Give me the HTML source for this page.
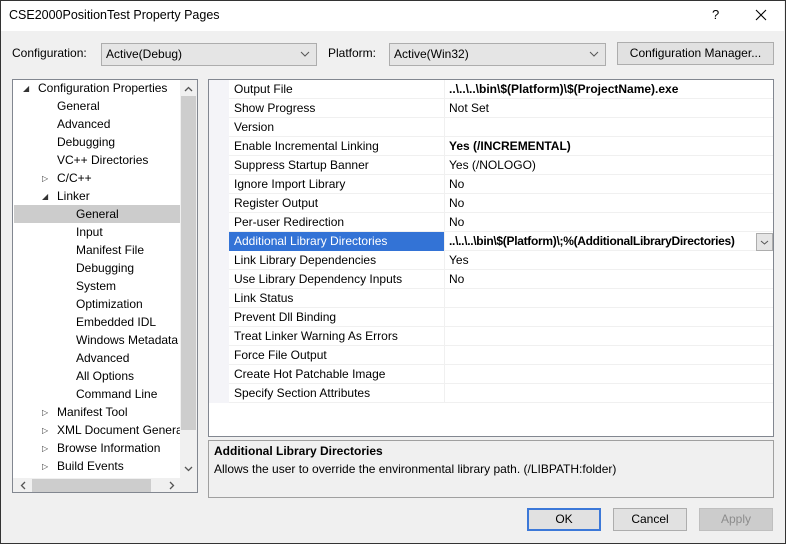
<!DOCTYPE html><html><head><style>
*{box-sizing:border-box;margin:0;padding:0}
body{width:786px;height:544px;overflow:hidden;font-family:"Liberation Sans",sans-serif;font-size:12px;color:#000;background:#f0f0f0;position:relative}
.abs{position:absolute}
.win{position:absolute;left:0;top:0;width:786px;height:544px;border:1px solid #333}
.title{position:absolute;left:0;top:0;width:784px;height:31px;background:#fff}
.combo{position:absolute;height:23px;background:#e5e5e5;border:1px solid #adadad;padding:3px 4px;line-height:15px}
.chev{position:absolute;right:6px;top:7px}
.btn{position:absolute;height:23px;background:#e1e1e1;border:1px solid #adadad;text-align:center;line-height:21px}
.tree{position:absolute;left:12px;top:79px;width:186px;height:414px;border:1px solid #828790;background:#fff}
.ti{position:absolute;height:18px;line-height:18px;white-space:nowrap}
.tri{position:absolute;font-size:8px;color:#333}
.grid{position:absolute;left:208px;top:79px;width:566px;height:358px;border:1px solid #828790;background:#fff}
.row{position:absolute;left:20px;width:544px;height:19px;border-bottom:1px solid #f0f0f0;line-height:19px}
.row .n{position:absolute;left:5px;top:0}
.row .v{position:absolute;left:220px;top:0;white-space:nowrap}
.row .sep{position:absolute;left:215px;top:0;width:1px;height:19px;background:#f0f0f0}
</style></head><body>
<div class="title"></div>
<div class="abs" style="left:9px;top:8px;font-size:12.5px">CSE2000PositionTest Property Pages</div>
<div class="abs" style="left:712px;top:7px;font-size:13px">?</div>
<svg class="abs" style="left:755px;top:9px" width="12" height="12"><path d="M1 1L11 11M11 1L1 11" stroke="#000" stroke-width="1.1" fill="none"/></svg>

<div class="abs" style="left:12px;top:46px">Configuration:</div>
<div class="combo" style="left:101px;top:43px;width:216px">Active(Debug)<svg class="chev" width="10" height="6"><path d="M1 1L5 5L9 1" stroke="#555" fill="none"/></svg></div>
<div class="abs" style="left:328px;top:46px">Platform:</div>
<div class="combo" style="left:389px;top:43px;width:217px">Active(Win32)<svg class="chev" width="10" height="6"><path d="M1 1L5 5L9 1" stroke="#555" fill="none"/></svg></div>
<div class="btn" style="left:617px;top:42px;width:157px">Configuration Manager...</div>

<div class="tree">
<div class="abs" style="left:167px;top:0;width:17px;height:398px;background:#f0f0f0"></div>
<div class="abs" style="left:168px;top:16px;width:15px;height:334px;background:#cdcdcd"></div>
<svg class="abs" style="left:171px;top:6px" width="9" height="6"><path d="M1 5L4.5 1.5L8 5" stroke="#555" stroke-width="1.3" fill="none"/></svg>
<svg class="abs" style="left:171px;top:386px" width="9" height="6"><path d="M1 1L4.5 4.5L8 1" stroke="#555" stroke-width="1.3" fill="none"/></svg>
<div class="abs" style="left:0;top:398px;width:184px;height:14px;background:#f0f0f0"></div>
<div class="abs" style="left:19px;top:399px;width:119px;height:13px;background:#cdcdcd"></div>
<svg class="abs" style="left:7px;top:401px" width="6" height="9"><path d="M5 1L1.5 4.5L5 8" stroke="#555" stroke-width="1.3" fill="none"/></svg>
<svg class="abs" style="left:156px;top:401px" width="6" height="9"><path d="M1 1L4.5 4.5L1 8" stroke="#555" stroke-width="1.3" fill="none"/></svg>
<div class="abs" style="left:1px;top:125px;width:166px;height:18px;background:#cccccc"></div>
<div class="tri" style="left:10px;top:4px">◢</div><div class="ti" style="left:25px;top:-1px">Configuration Properties</div>
<div class="ti" style="left:44px;top:17px">General</div>
<div class="ti" style="left:44px;top:35px">Advanced</div>
<div class="ti" style="left:44px;top:53px">Debugging</div>
<div class="ti" style="left:44px;top:71px">VC++ Directories</div>
<div class="tri" style="left:29px;top:94px">▷</div><div class="ti" style="left:44px;top:89px">C/C++</div>
<div class="tri" style="left:29px;top:112px">◢</div><div class="ti" style="left:44px;top:107px">Linker</div>
<div class="ti" style="left:63px;top:125px">General</div>
<div class="ti" style="left:63px;top:143px">Input</div>
<div class="ti" style="left:63px;top:161px">Manifest File</div>
<div class="ti" style="left:63px;top:179px">Debugging</div>
<div class="ti" style="left:63px;top:197px">System</div>
<div class="ti" style="left:63px;top:215px">Optimization</div>
<div class="ti" style="left:63px;top:233px">Embedded IDL</div>
<div class="ti" style="left:63px;top:251px;width:104px;overflow:hidden">Windows Metadata</div>
<div class="ti" style="left:63px;top:269px">Advanced</div>
<div class="ti" style="left:63px;top:287px">All Options</div>
<div class="ti" style="left:63px;top:305px">Command Line</div>
<div class="tri" style="left:29px;top:328px">▷</div><div class="ti" style="left:44px;top:323px">Manifest Tool</div>
<div class="tri" style="left:29px;top:346px">▷</div><div class="ti" style="left:44px;top:341px;width:123px;overflow:hidden">XML Document Generator</div>
<div class="tri" style="left:29px;top:364px">▷</div><div class="ti" style="left:44px;top:359px">Browse Information</div>
<div class="tri" style="left:29px;top:382px">▷</div><div class="ti" style="left:44px;top:377px">Build Events</div>
</div>

<div class="grid">
<div class="abs" style="left:0;top:0;width:20px;height:323px;background:#f4f4f8"></div>
<div class="row" style="top:0"><span class="n">Output File</span><span class="sep"></span><span class="v" style="font-weight:bold">..\..\..\bin\$(Platform)\$(ProjectName).exe</span></div>
<div class="row" style="top:19px"><span class="n">Show Progress</span><span class="sep"></span><span class="v">Not Set</span></div>
<div class="row" style="top:38px"><span class="n">Version</span><span class="sep"></span></div>
<div class="row" style="top:57px"><span class="n">Enable Incremental Linking</span><span class="sep"></span><span class="v" style="font-weight:bold">Yes (/INCREMENTAL)</span></div>
<div class="row" style="top:76px"><span class="n">Suppress Startup Banner</span><span class="sep"></span><span class="v">Yes (/NOLOGO)</span></div>
<div class="row" style="top:95px"><span class="n">Ignore Import Library</span><span class="sep"></span><span class="v">No</span></div>
<div class="row" style="top:114px"><span class="n">Register Output</span><span class="sep"></span><span class="v">No</span></div>
<div class="row" style="top:133px"><span class="n">Per-user Redirection</span><span class="sep"></span><span class="v">No</span></div>
<div class="row" style="top:152px"><span class="n" style="left:0;width:215px;height:19px;background:#3373d6;color:#fff;padding-left:5px">Additional Library Directories</span><span class="sep"></span><span class="v" style="font-weight:bold;letter-spacing:-0.3px">..\..\..\bin\$(Platform)\;%(AdditionalLibraryDirectories)</span><span class="abs" style="left:527px;top:1px;width:17px;height:18px;background:#e5e5e5;border:1px solid #adadad"><svg class="abs" style="left:3px;top:6px" width="9" height="5"><path d="M1 1L4.5 4L8 1" stroke="#555" fill="none"/></svg></span></div>
<div class="row" style="top:171px"><span class="n">Link Library Dependencies</span><span class="sep"></span><span class="v">Yes</span></div>
<div class="row" style="top:190px"><span class="n">Use Library Dependency Inputs</span><span class="sep"></span><span class="v">No</span></div>
<div class="row" style="top:209px"><span class="n">Link Status</span><span class="sep"></span></div>
<div class="row" style="top:228px"><span class="n">Prevent Dll Binding</span><span class="sep"></span></div>
<div class="row" style="top:247px"><span class="n">Treat Linker Warning As Errors</span><span class="sep"></span></div>
<div class="row" style="top:266px"><span class="n">Force File Output</span><span class="sep"></span></div>
<div class="row" style="top:285px"><span class="n">Create Hot Patchable Image</span><span class="sep"></span></div>
<div class="row" style="top:304px"><span class="n">Specify Section Attributes</span><span class="sep"></span></div>
</div>

<div class="abs" style="left:208px;top:440px;width:566px;height:58px;border:1px solid #a0a0a0;background:#f0f0f0">
<div class="abs" style="left:5px;top:3px;font-weight:bold">Additional Library Directories</div>
<div class="abs" style="left:5px;top:21px">Allows the user to override the environmental library path. (/LIBPATH:folder)</div>
</div>

<div class="btn" style="left:527px;top:508px;width:74px;border:2px solid #3c78d8;line-height:19px">OK</div>
<div class="btn" style="left:613px;top:508px;width:74px">Cancel</div>
<div class="btn" style="left:699px;top:508px;width:74px;background:#cccccc;border-color:#bfbfbf;color:#8c8c8c">Apply</div>
<div class="win"></div>
</body></html>
